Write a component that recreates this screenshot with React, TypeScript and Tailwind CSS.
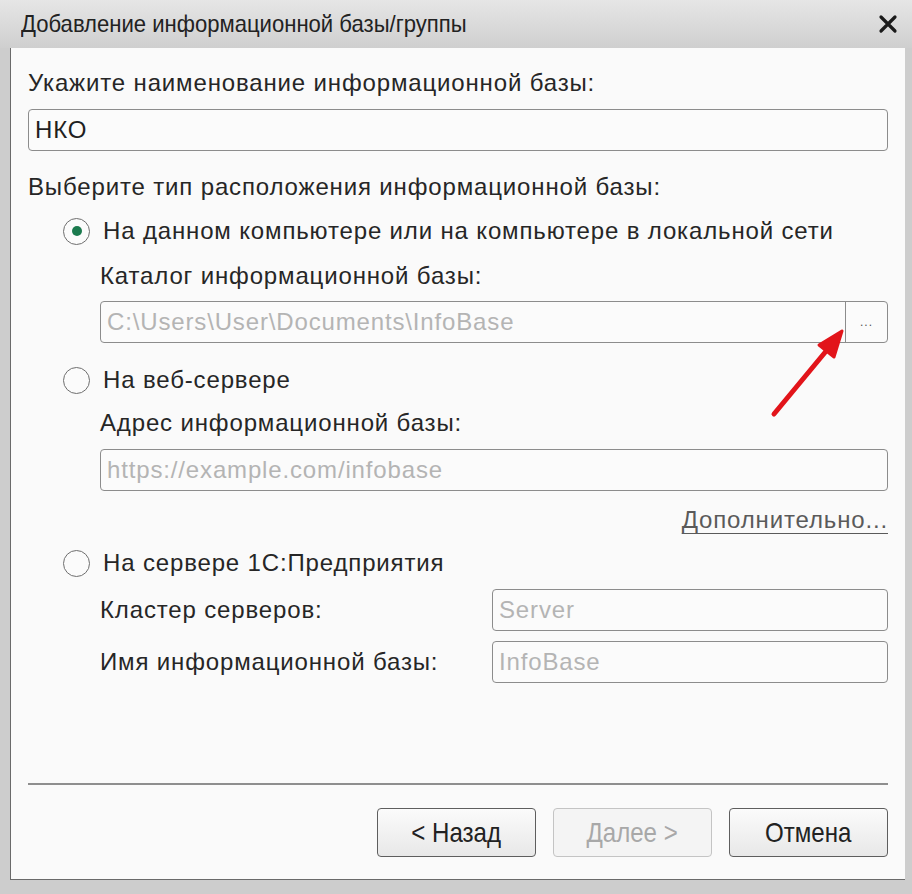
import React from "react";

const F = { fontFamily: '"Liberation Sans", Arial, sans-serif' };

const T = "text-[24px] tracking-[0.85px]";

function Radio({ checked, label }: { checked?: boolean; label: string }) {
  return (
    <div className="flex items-center h-[28px] pl-[35px]">
      <div className="w-[27px] h-[27px] rounded-full border-[1.5px] border-[#6e6e6e] bg-[#fbfbfb] flex items-center justify-center">
        {checked && <div className="w-[10px] h-[10px] rounded-full bg-[#1b7a4e]" />}
      </div>
      <span className={`ml-[13px] ${T} text-[#262626]`}>{label}</span>
    </div>
  );
}

function Field({ value, muted, className = "" }: { value: string; muted?: boolean; className?: string }) {
  return (
    <div
      className={`h-[42px] rounded-[4px] border-[1.5px] border-[#8c8c8c] bg-[#fbfbfb] flex items-center px-[6px] ${className}`}
    >
      <span className={`${T} ${muted ? "text-[#b4b4b4]" : "text-[#1f1f1f]"}`}>{value}</span>
    </div>
  );
}

function Btn({ label, disabled }: { label: string; disabled?: boolean }) {
  return (
    <button
      className={`w-[159px] h-[49px] rounded-[4px] border-[1.5px] flex items-center justify-center ${
        disabled
          ? "border-[#c4c4c4] bg-[#f4f4f4] text-[#a8a8a8]"
          : "border-[#5e5e5e] bg-gradient-to-b from-[#fbfbfb] to-[#e8e8e8] text-[#222]"
      }`}
    >
      <span className="inline-block text-[28px] scale-x-[0.86] whitespace-nowrap">{label}</span>
    </button>
  );
}

export default function App() {
  return (
    <div style={F} className="w-[912px] h-[894px] bg-[#cdcdcd] flex flex-col overflow-hidden relative">
      {/* Title bar */}
      <div className="h-[48px] flex items-center justify-between pl-[21px] pr-[14px] bg-gradient-to-b from-[#e6e6e6] to-[#cfcfcf]">
        <span className="inline-block text-[24px] text-[#222] scale-x-[0.92] origin-left whitespace-nowrap">
          Добавление информационной базы/группы
        </span>
        <svg width="20" height="20" viewBox="0 0 20 20">
          <path d="M3 3 L17 17 M17 3 L3 17" stroke="#1a1a1a" strokeWidth="3.2" strokeLinecap="round" />
        </svg>
      </div>
      {/* Content */}
      <div className="ml-[10px] mr-[7px] mb-[14px] flex-1 bg-[#fafafa] border-l-[1.5px] border-b-[1.5px] border-[#6a6a6a] flex flex-col px-[17px] relative">
        <div className={`mt-[21px] h-[28px] flex items-center ${T} text-[#262626]`}>
          Укажите наименование информационной базы:
        </div>
        <Field value="НКО" className="mt-[12px]" />
        <div className={`mt-[22px] h-[28px] flex items-center ${T} text-[#262626]`}>
          Выберите тип расположения информационной базы:
        </div>
        <div className="mt-[16px]">
          <Radio checked label="На данном компьютере или на компьютере в локальной сети" />
        </div>
        <div className={`mt-[17px] pl-[72px] h-[28px] flex items-center ${T} text-[#262626]`}>
          Каталог информационной базы:
        </div>
        <div className="mt-[11px] ml-[72px] h-[42px] rounded-[4px] border-[1.5px] border-[#8c8c8c] bg-[#fbfbfb] flex">
          <div className="flex-1 flex items-center px-[6px]">
            <span className={`${T} text-[#b4b4b4]`}>C:\Users\User\Documents\InfoBase</span>
          </div>
          <div className="w-[42px] border-l-[1.5px] border-[#8c8c8c] flex items-center justify-center text-[12px] text-[#555] tracking-[1px]">
            ...
          </div>
        </div>
        <div className="mt-[23px]">
          <Radio label="На веб-сервере" />
        </div>
        <div className={`mt-[15px] pl-[72px] h-[28px] flex items-center ${T} text-[#262626]`}>
          Адрес информационной базы:
        </div>
        <Field value="https://example.com/infobase" muted className="mt-[12px] ml-[72px]" />
        <div className="mt-[15px] h-[28px] flex items-center justify-end">
          <span className={`${T} text-[#5a5a5a] underline underline-offset-[5px] decoration-[1px]`}>Дополнительно...</span>
        </div>
        <div className="mt-[15px]">
          <Radio label="На сервере 1С:Предприятия" />
        </div>
        <div className="mt-[12px] ml-[72px] flex items-center">
          <span className={`w-[392px] ${T} text-[#262626]`}>Кластер серверов:</span>
          <Field value="Server" muted className="flex-1" />
        </div>
        <div className="mt-[10px] ml-[72px] flex items-center">
          <span className={`w-[392px] ${T} text-[#262626]`}>Имя информационной базы:</span>
          <Field value="InfoBase" muted className="flex-1" />
        </div>
        <div className="mt-auto h-[2px] bg-[#8e8e8e]" />
        <div className="mt-[23px] mb-[22px] flex justify-end gap-[17px]">
          <Btn label="< Назад" />
          <Btn label="Далее >" disabled />
          <Btn label="Отмена" />
        </div>
      </div>
      {/* red arrow overlay */}
      <svg className="absolute left-0 top-0 pointer-events-none" width="912" height="894">
        <line x1="774" y1="414" x2="827" y2="350" stroke="#e2141a" strokeWidth="5" strokeLinecap="round" />
        <polygon points="842,331 819,345 834,357" fill="#e2141a" stroke="#e2141a" strokeWidth="3" strokeLinejoin="round" />
      </svg>
    </div>
  );
}
